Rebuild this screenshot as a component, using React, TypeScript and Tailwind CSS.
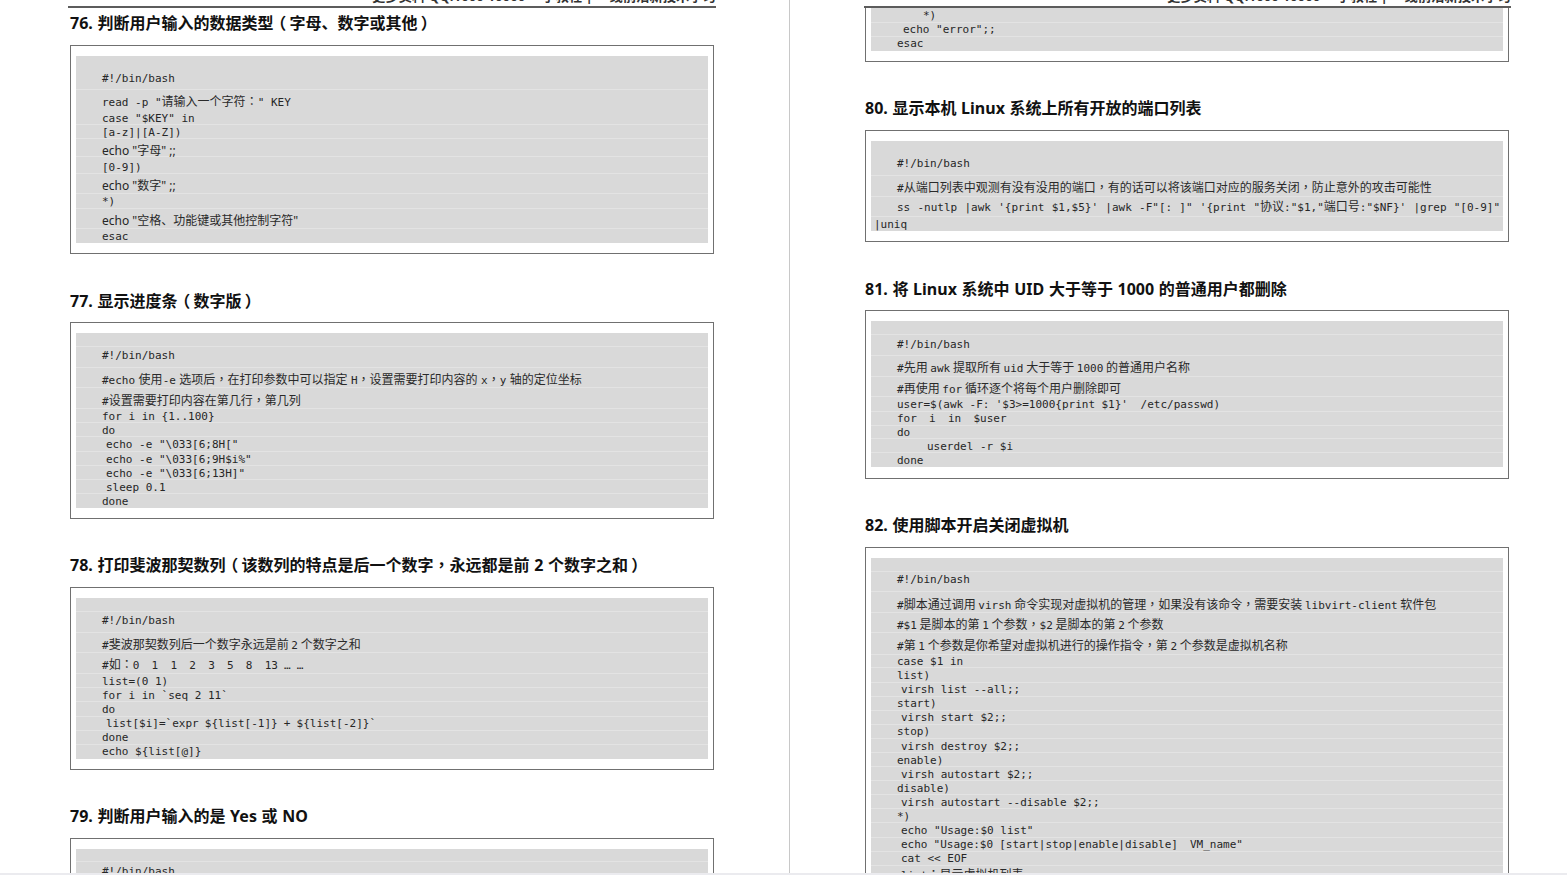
import React from "react";

type Row = { c: string; t?: string; s?: boolean; i?: string; last?: boolean };

const CJK = /( ?[\u3001-\u303f\u4e00-\u9fff\uff00-\uffef]+ ?)/;

function Punct({ ch }: { ch: string }) {
  if (ch === "（") return <span className="inline-block -translate-x-[0.2em] font-['Noto_Sans_CJK_TC',sans-serif]">（</span>;
  if (ch === "）") return <span className="inline-block translate-x-[0.2em] font-['Noto_Sans_CJK_TC',sans-serif]">）</span>;
  return <span className="font-['Noto_Sans_CJK_TC',sans-serif]">{ch}</span>;
}

function Cjk({ text }: { text: string }) {
  const parts = text.split(/([（），：])/).filter(Boolean);
  return (
    <>
      {parts.map((p, k) => ("（），：".includes(p) ? <Punct key={k} ch={p} /> : <span key={k}>{p}</span>))}
    </>
  );
}

function CodeText({ t, s }: { t: string; s?: boolean }) {
  const parts = t.split(CJK).filter(Boolean);
  return (
    <span className="whitespace-pre">
      {parts.map((p, k) =>
        CJK.test(p) ? (
          <span key={k} className="text-[12px] font-['Noto_Sans_CJK_SC',sans-serif] text-[#2a2a2a]">
            <Cjk text={p} />
          </span>
        ) : s ? (
          <span key={k} className="text-[12px] font-['Noto_Sans',sans-serif]">{p}</span>
        ) : (
          <span key={k}>{p}</span>
        )
      )}
    </span>
  );
}

function Code({ rows }: { rows: Row[] }) {
  return (
    <div className="bg-[#d9d9d9] font-['DejaVu_Sans_Mono',monospace] text-[11px] leading-[8px] text-[#262626]">
      {rows.map((r, k) => (
        <div
          key={k}
          className={
            "box-border flex items-end pl-[26px] " +
            (r.last ? "" : "border-b border-[#e3e3e3] ") +
            r.c
          }
        >
          {r.t ? (
            <div className={r.i ?? ""}>
              <CodeText t={r.t} s={r.s} />
            </div>
          ) : null}
        </div>
      ))}
    </div>
  );
}

function Heading({ t, c }: { t: string; c: string }) {
  const parts = t.split(/([（），：])/).filter(Boolean);
  return (
    <h2 className={"h-[24px] whitespace-pre text-[16px] leading-[24px] font-bold text-[#111] [word-spacing:0.5px] font-['Noto_Sans','Noto_Sans_CJK_SC',sans-serif] " + c}>
      {parts.map((p, k) => ("（），：".includes(p) ? <Punct key={k} ch={p} /> : <span key={k}>{p}</span>))}
    </h2>
  );
}

function Box({ rows, c }: { rows: Row[]; c: string }) {
  return (
    <div className={"box-border w-[644px] border border-[#707070] px-[5px] " + c}>
      <Code rows={rows} />
    </div>
  );
}

const r76: Row[] = [
  { c: "h-[34px] pb-[6px]", t: "#!/bin/bash" },
  { c: "h-[20px] pb-[3px]", t: "read -p \"请输入一个字符：\" KEY", last: true },
  { c: "h-[15px] pb-px", t: "case \"$KEY\" in" },
  { c: "h-[14px] pb-px", t: "[a-z]|[A-Z])" },
  { c: "h-[18px] pb-0", t: "echo \"字母\" ;;", s: true },
  { c: "h-[17px] pb-px", t: "[0-9])" },
  { c: "h-[20px] pb-[2px]", t: "echo \"数字\" ;;", s: true },
  { c: "h-[15px] pb-[2px]", t: "*)" },
  { c: "h-[20px] pb-[2px]", t: "echo \"空格、功能键或其他控制字符\"", s: true },
  { c: "h-[14px] pb-[2px]", t: "esac", last: true },
];

const r77: Row[] = [
  { c: "h-[14px]" },
  { c: "h-[21px] pb-[7px]", t: "#!/bin/bash" },
  { c: "h-[20px] pb-[2px]", t: "#echo 使用-e 选项后，在打印参数中可以指定 H，设置需要打印内容的 x，y 轴的定位坐标", i: "[word-spacing:0.8px]" },
  { c: "h-[21px] pb-[2px]", t: "#设置需要打印内容在第几行，第几列" },
  { c: "h-[14px] pb-px", t: "for i in {1..100}" },
  { c: "h-[14px] pb-px", t: "do" },
  { c: "h-[15px] pb-[2px]", t: "echo -e \"\\033[6;8H[\"", i: "ml-[4px]" },
  { c: "h-[14px] pb-px", t: "echo -e \"\\033[6;9H$i%\"", i: "ml-[4px]" },
  { c: "h-[14px] pb-px", t: "echo -e \"\\033[6;13H]\"", i: "ml-[4px]" },
  { c: "h-[14px] pb-px", t: "sleep 0.1", i: "ml-[4px]" },
  { c: "h-[14px] pb-[2px]", t: "done", last: true },
];

const r78: Row[] = [
  { c: "h-[14px]" },
  { c: "h-[21px] pb-[7px]", t: "#!/bin/bash" },
  { c: "h-[20px] pb-[2px]", t: "#斐波那契数列后一个数字永远是前 2 个数字之和" },
  { c: "h-[21px] pb-[3px]", t: "#如：0  1  1  2  3  5  8  13 … …", i: "[word-spacing:-0.5px]" },
  { c: "h-[14px] pb-px", t: "list=(0 1)" },
  { c: "h-[14px] pb-px", t: "for i in `seq 2 11`" },
  { c: "h-[15px] pb-[2px]", t: "do" },
  { c: "h-[14px] pb-[2px]", t: "list[$i]=`expr ${list[-1]} + ${list[-2]}`", i: "ml-[4px] [word-spacing:-0.5px]" },
  { c: "h-[14px] pb-[2px]", t: "done" },
  { c: "h-[14px] pb-[3px]", t: "echo ${list[@]}", last: true },
];

const r79: Row[] = [
  { c: "h-[13px]" },
  { c: "h-[21px] pb-[7px]", t: "#!/bin/bash", last: true },
];

const r79b: Row[] = [
  { c: "h-[15px] pb-[2px]", t: "*)", i: "ml-[26px]" },
  { c: "h-[14px] pb-[2px]", t: "echo \"error\";;", i: "ml-[6px]" },
  { c: "h-[14px] pb-[3px]", t: "esac", last: true },
];

const r80: Row[] = [
  { c: "h-[35px] pb-[7px]", t: "#!/bin/bash" },
  { c: "h-[21px] pb-[3px]", t: "#从端口列表中观测有没有没用的端口，有的话可以将该端口对应的服务关闭，防止意外的攻击可能性" },
  { c: "h-[20px] pb-[4px]", t: "ss -nutlp |awk '{print $1,$5}' |awk -F\"[: ]\" '{print \"协议:\"$1,\"端口号:\"$NF}' |grep \"[0-9]\"", i: "[word-spacing:0.6px]" },
  { c: "h-[14px] pb-[2px]", t: "|uniq", i: "-ml-[23px]", last: true },
];

const r81: Row[] = [
  { c: "h-[14px]" },
  { c: "h-[21px] pb-[6px]", t: "#!/bin/bash" },
  { c: "h-[21px] pb-[3px]", t: "#先用 awk 提取所有 uid 大于等于 1000 的普通用户名称" },
  { c: "h-[20px] pb-[2px]", t: "#再使用 for 循环逐个将每个用户删除即可" },
  { c: "h-[15px] pb-[2px]", t: "user=$(awk -F: '$3>=1000{print $1}'  /etc/passwd)", i: "[word-spacing:-0.3px]" },
  { c: "h-[14px] pb-[2px]", t: "for  i  in  $user", i: "[word-spacing:-0.5px]" },
  { c: "h-[13px] pb-px", t: "do" },
  { c: "h-[14px] pb-px", t: "userdel -r $i", i: "ml-[30px]" },
  { c: "h-[14px] pb-[2px]", t: "done", last: true },
];

const r82: Row[] = [
  { c: "h-[14px]" },
  { c: "h-[20px] pb-[7px]", t: "#!/bin/bash" },
  { c: "h-[21px] pb-[2px]", t: "#脚本通过调用 virsh 命令实现对虚拟机的管理，如果没有该命令，需要安装 libvirt-client 软件包" },
  { c: "h-[20px] pb-[2px]", t: "#$1 是脚本的第 1 个参数，$2 是脚本的第 2 个参数" },
  { c: "h-[22px] pb-[3px]", t: "#第 1 个参数是你希望对虚拟机进行的操作指令，第 2 个参数是虚拟机名称" },
  { c: "h-[13px] pb-px", t: "case $1 in" },
  { c: "h-[15px] pb-[2px]", t: "list)" },
  { c: "h-[14px] pb-[2px]", t: "virsh list --all;;", i: "ml-[4px]" },
  { c: "h-[14px] pb-[2px]", t: "start)" },
  { c: "h-[14px] pb-[2px]", t: "virsh start $2;;", i: "ml-[4px]" },
  { c: "h-[14px] pb-[2px]", t: "stop)" },
  { c: "h-[14px] pb-px", t: "virsh destroy $2;;", i: "ml-[4px]" },
  { c: "h-[14px] pb-px", t: "enable)" },
  { c: "h-[14px] pb-px", t: "virsh autostart $2;;", i: "ml-[4px]" },
  { c: "h-[14px] pb-px", t: "disable)" },
  { c: "h-[14px] pb-px", t: "virsh autostart --disable $2;;", i: "ml-[4px]" },
  { c: "h-[14px] pb-px", t: "*)" },
  { c: "h-[15px] pb-[2px]", t: "echo \"Usage:$0 list\"", i: "ml-[4px]" },
  { c: "h-[14px] pb-[2px]", t: "echo \"Usage:$0 [start|stop|enable|disable]  VM_name\"", i: "ml-[4px] [word-spacing:-0.6px]" },
  { c: "h-[14px] pb-[2px]", t: "cat << EOF", i: "ml-[4px]" },
  { c: "h-[14px] pb-0", t: "list：显示虚拟机列表", i: "ml-[4px]", last: true },
];

function PageHead({ c }: { c: string }) {
  return (
    <div className={"box-border h-[8px] overflow-hidden border-b-2 border-[#5c5c5c] " + c}>
      <p className="-mt-[11px] whitespace-pre text-right text-[13.3px] leading-[14px] font-bold text-[#333] font-['Noto_Sans','Noto_Sans_CJK_SC',sans-serif]">
        更多资料 QQ:1000 10000 一手教程 | 一线前沿新技术学习
      </p>
    </div>
  );
}

export default function App() {
  return (
    <div className="flex h-[875px] w-[1567px] flex-col overflow-hidden bg-white">
      <div className="flex h-[873px] overflow-hidden">
        <div className="box-border h-full w-[790px] overflow-hidden border-r border-[#c8c8c8]">
          <PageHead c="ml-[68px] w-[648px]" />
          <div className="ml-[70px]">
            <Heading c="mt-[2px]" t="76. 判断用户输入的数据类型（字母、数字或其他）" />
            <Box c="mt-[11px] pt-[10px] pb-[10px]" rows={r76} />
            <Heading c="mt-[34px]" t="77. 显示进度条（数字版）" />
            <Box c="mt-[10px] pt-[10px] pb-[10px]" rows={r77} />
            <Heading c="mt-[33px]" t="78. 打印斐波那契数列（该数列的特点是后一个数字，永远都是前 2 个数字之和）" />
            <Box c="mt-[11px] pt-[10px] pb-[10px]" rows={r78} />
            <Heading c="mt-[34px]" t="79. 判断用户输入的是 Yes 或 NO" />
            <Box c="mt-[10px] pt-[10px]" rows={r79} />
          </div>
        </div>
        <div className="h-full flex-1 overflow-hidden">
          <PageHead c="ml-[74px] w-[647px]" />
          <div className="ml-[75px]">
            <Box c="border-t-0 pb-[10px]" rows={r79b} />
            <Heading c="mt-[34px]" t="80. 显示本机 Linux 系统上所有开放的端口列表" />
            <Box c="mt-[10px] pt-[10px] pb-[10px]" rows={r80} />
            <Heading c="mt-[35px]" t="81. 将 Linux 系统中 UID 大于等于 1000 的普通用户都删除" />
            <Box c="mt-[9px] pt-[10px] pb-[11px]" rows={r81} />
            <Heading c="mt-[34px]" t="82. 使用脚本开启关闭虚拟机" />
            <Box c="mt-[10px] pt-[10px]" rows={r82} />
          </div>
        </div>
      </div>
      <div className="h-[2px] bg-[#ebebef]" />
    </div>
  );
}
